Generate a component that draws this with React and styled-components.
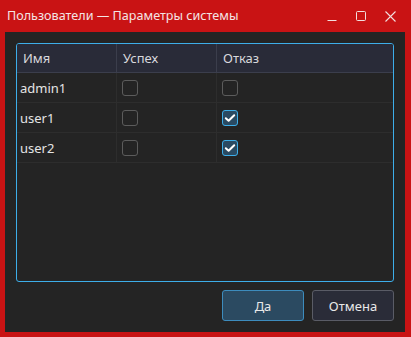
import React from "react";
import styled, { createGlobalStyle } from "styled-components";

const Global = createGlobalStyle`
  html, body { margin: 0; padding: 0; background: #c91314; }
  body { font-family: "Noto Sans", "DejaVu Sans", sans-serif; }
`;

const Window = styled.div`
  width: 411px;
  height: 337px;
  background: #c91314;
  display: flex;
  flex-direction: column;
  box-sizing: border-box;
`;

const TitleBar = styled.div`
  height: 32px;
  display: flex;
  align-items: center;
  padding-left: 7px;
  padding-right: 15px;
  color: #f4e4e4;
  font-size: 12.6px;
  box-sizing: border-box;
`;

const Title = styled.div`
  flex: 1;
  white-space: nowrap;
  margin-top: -1px;
`;

const Controls = styled.div`
  display: flex;
  align-items: center;
  gap: 19px;
`;

const Body = styled.div`
  flex: 1;
  margin: 0 6px 5px 5px;
  background: #242424;
  padding: 11px 11px 11px 11px;
  display: flex;
  flex-direction: column;
  gap: 8px;
  box-sizing: border-box;
`;

const Table = styled.div`
  flex: 1;
  border: 1px solid #3daee9;
  border-radius: 3px;
  overflow: hidden;
  display: flex;
  flex-direction: column;
  background: #242424;
`;

const Row = styled.div`
  display: grid;
  grid-template-columns: 100px 100px 1fr;
  height: ${(p) => (p.$header ? 29 : 30)}px;
  box-sizing: border-box;
  border-bottom: 1px solid ${(p) => (p.$header ? "#3b3e4c" : "#2d2d2d")};
  background: ${(p) => (p.$header ? "#292b38" : "transparent")};
`;

const Cell = styled.div`
  display: flex;
  align-items: center;
  padding-left: ${(p) => (p.$header ? 6 : p.$check ? 5 : 3)}px;
  border-right: ${(p) =>
    p.$last ? "none" : `1px solid ${p.$header ? "#3b3e4c" : "#2d2d2d"}`};
  color: ${(p) => (p.$header ? "#d8d8dc" : "#e4e4e4")};
  font-size: 13px;
  box-sizing: border-box;
`;

const Box = styled.div`
  width: 16px;
  height: 16px;
  box-sizing: border-box;
  border-radius: 3px;
  border: 1px solid ${(p) => (p.$on ? "#3daee9" : "#5c5c5c")};
  background: ${(p) => (p.$on ? "#2a4a62" : "#242424")};
  display: flex;
  align-items: center;
  justify-content: center;
`;

const Footer = styled.div`
  display: flex;
  justify-content: flex-end;
  gap: 8px;
`;

const Button = styled.button`
  width: 82px;
  height: 31px;
  box-sizing: border-box;
  border-radius: 3px;
  border: 1px solid ${(p) => (p.$primary ? "#3d8cbd" : "#5a5c66")};
  background: ${(p) => (p.$primary ? "#2b4a61" : "#2a2c38")};
  color: #e8e8e8;
  font-family: "Noto Sans", "DejaVu Sans", sans-serif;
  font-size: 13px;
  padding: 0;
`;

const Check = ({ on }) => (
  <Box $on={on}>
    {on && (
      <svg width="12" height="10" viewBox="0 0 12 10">
        <path
          d="M1.8 5.2 L4.6 7.8 L10.2 2.2"
          fill="none"
          stroke="#ffffff"
          strokeWidth="2"
          strokeLinecap="round"
          strokeLinejoin="round"
        />
      </svg>
    )}
  </Box>
);

const users = [
  { name: "admin1", ok: false, fail: false },
  { name: "user1", ok: false, fail: true },
  { name: "user2", ok: false, fail: true },
];

export default function App() {
  return (
    <>
      <Global />
      <Window>
        <TitleBar>
          <Title>Пользователи — Параметры системы</Title>
          <Controls>
            <svg width="10" height="10" viewBox="0 0 10 10">
              <line x1="0.5" y1="9.5" x2="9.5" y2="9.5" stroke="#f2dede" strokeWidth="1" />
            </svg>
            <svg width="10" height="10" viewBox="0 0 10 10">
              <rect x="0.5" y="0.5" width="9" height="9" rx="1" fill="none" stroke="#f2dede" strokeWidth="1" />
            </svg>
            <svg width="11" height="11" viewBox="0 0 11 11">
              <path d="M0.5 0.5 L10.5 10.5 M10.5 0.5 L0.5 10.5" stroke="#f2dede" strokeWidth="1.1" />
            </svg>
          </Controls>
        </TitleBar>
        <Body>
          <Table>
            <Row $header>
              <Cell $header>Имя</Cell>
              <Cell $header>Успех</Cell>
              <Cell $header $last>Отказ</Cell>
            </Row>
            {users.map((u) => (
              <Row key={u.name}>
                <Cell>{u.name}</Cell>
                <Cell $check>
                  <Check on={u.ok} />
                </Cell>
                <Cell $check $last>
                  <Check on={u.fail} />
                </Cell>
              </Row>
            ))}
          </Table>
          <Footer>
            <Button $primary>Да</Button>
            <Button>Отмена</Button>
          </Footer>
        </Body>
      </Window>
    </>
  );
}
